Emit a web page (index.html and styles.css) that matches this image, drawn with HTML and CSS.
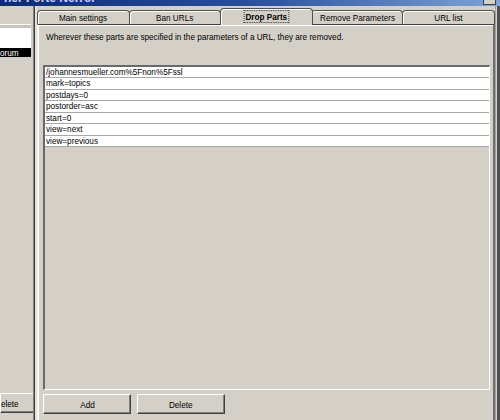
FILE: index.html
```html
<!DOCTYPE html>
<html>
<head>
<meta charset="utf-8">
<link rel="stylesheet" href="styles.css">
</head>
<body>
<div class="titlebar">
  <span class="title-text">ner Forte Nerror</span>
  <span class="title-btn"></span>
</div>
<div class="window">
  <div class="left-pane">
    <div class="left-head"></div>
    <div class="left-box">
      <div class="left-input"></div>
      <div class="left-item"><span class="t">Forum</span></div>
    </div>
    <div class="left-spacer"></div>
    <button class="btn btn-left"><span class="t">Delete</span></button>
  </div>
  <div class="splitter"></div>
  <div class="tab-area">
    <div class="tab-strip">
      <div class="tab"><span class="t c">Main settings</span></div>
      <div class="tab"><span class="t c">Ban URLs</span></div>
      <div class="tab tab-active"><span class="t c focus">Drop Parts</span></div>
      <div class="tab"><span class="t c">Remove Parameters</span></div>
      <div class="tab"><span class="t c">URL list</span></div>
    </div>
    <div class="tab-panel">
      <div class="desc"><span class="t">Wherever these parts are specified in the parameters of a URL, they are removed.</span></div>
      <div class="list">
        <div class="row"><span class="t">/johannesmueller.com%5Fnon%5Fssl</span></div>
        <div class="row"><span class="t">mark=topics</span></div>
        <div class="row"><span class="t">postdays=0</span></div>
        <div class="row"><span class="t">postorder=asc</span></div>
        <div class="row"><span class="t">start=0</span></div>
        <div class="row"><span class="t">view=next</span></div>
        <div class="row"><span class="t">view=previous</span></div>
      </div>
      <div class="btn-row">
        <button class="btn"><span class="t c">Add</span></button>
        <button class="btn"><span class="t c">Delete</span></button>
      </div>
    </div>
  </div>
  <div class="win-edge"></div>
</div>
</body>
</html>
```
FILE: styles.css
```css
html, body {
  margin: 0;
  padding: 0;
}
body {
  width: 500px;
  height: 420px;
  overflow: hidden;
  background: #d4d0c8;
  font-family: "Liberation Sans", Arial, sans-serif;
  font-size: 9.5px;
  color: #000;
  display: flex;
  flex-direction: column;
}
.t {
  display: inline-block;
  white-space: nowrap;
  transform: scaleX(0.86);
  transform-origin: left center;
}
.t.c {
  transform-origin: center center;
}
.titlebar {
  height: 6px;
  flex: none;
  background: linear-gradient(to right, #0c2a78 0%, #2a4f9c 50%, #7fa3d6 100%);
  position: relative;
  overflow: hidden;
}
.title-text {
  position: absolute;
  left: 4px;
  top: -9px;
  color: #fff;
  font-weight: bold;
  font-size: 12px;
  opacity: 0.8;
}
.title-btn {
  position: absolute;
  right: 4px;
  top: -8px;
  width: 11px;
  height: 11px;
  background: #d4d0c8;
  border: 1px solid #404040;
}
.window {
  flex: 1;
  display: flex;
  min-height: 0;
}
.left-pane {
  width: 33px;
  flex: none;
  display: flex;
  flex-direction: column;
  overflow: hidden;
}
.left-head {
  margin-top: 18px;
  height: 3px;
  width: 31px;
  background: #c8c4bc;
  border-top: 1px solid #fff;
}
.left-box {
  width: 31px;
  background: #fff;
}
.left-input {
  height: 20px;
}
.left-item {
  height: 9px;
  line-height: 9px;
  background: #000;
  color: #fff;
  white-space: nowrap;
  overflow: hidden;
  padding-left: 0;
}
.left-item .t {
  margin-left: -5px;
}
.left-spacer {
  flex: 1;
}
.btn-left {
  width: 32px;
  flex: none;
  margin-bottom: 7px;
  text-align: left;
  overflow: hidden;
  border-left-color: #d4d0c8;
}
.btn-left .t {
  margin-left: -6px;
}
.splitter {
  width: 4px;
  flex: none;
  border-left: 1px solid #808080;
  box-sizing: border-box;
  background: linear-gradient(to right, #404040 0 1px, #e4e1da 1px 100%);
}
.tab-area {
  width: 458px;
  flex: none;
  display: flex;
  flex-direction: column;
}
.tab-strip {
  height: 18px;
  display: flex;
  align-items: flex-end;
  position: relative;
  z-index: 1;
}
.tab {
  flex: 1;
  height: 13px;
  line-height: 13px;
  text-align: center;
  border: 1px solid #505050;
  border-bottom: none;
  border-radius: 4px 4px 0 0;
  box-shadow: inset 1px 1px 0 #fff;
  background: #d4d0c8;
  white-space: nowrap;
}
.tab + .tab {
  margin-left: -1px;
}
.tab-active {
  height: 16px;
  line-height: 16px;
  margin: 0 -2px -1px -2px;
  font-weight: bold;
  position: relative;
  z-index: 2;
}
.tab-active + .tab {
  margin-left: 0;
}
.focus {
  outline: 1px dotted #303030;
  outline-offset: 0;
  line-height: 11px;
  padding: 0 1px;
}
.tab-panel {
  flex: 1;
  border-top: 1px solid #404040;
  border-left: 1px solid #f4f2ee;
  border-right: 2px solid #707070;
  box-shadow: inset 1px 1px 0 #fff;
  padding: 0 3px 0 5px;
  display: flex;
  flex-direction: column;
}
.desc {
  padding: 6px 0 0 3px;
  height: 14px;
  line-height: 11px;
  white-space: nowrap;
}
.list {
  margin-top: 20px;
  height: 322px;
  border-left: 2px solid #6a6a6a;
  border-top: 2px solid #6a6a6a;
  border-right: 1px solid #fff;
  border-bottom: 1px solid #fff;
}
.row {
  height: 10.45px;
  line-height: 10.45px;
  border-bottom: 1px solid #a8a8a8;
  background: #fff;
  padding-left: 1px;
  white-space: nowrap;
}
.btn-row {
  display: flex;
  gap: 6px;
  margin-top: 4px;
}
.btn {
  width: 88px;
  height: 20px;
  padding: 0;
  font-family: inherit;
  font-size: 9.5px;
  color: #000;
  background: #d4d0c8;
  border: 1px solid;
  border-color: #fff #404040 #404040 #fff;
  box-shadow: inset -1px -1px 0 #808080;
}
.win-edge {
  flex: 1;
  border-left: 1px solid #a0a0a0;
  background: linear-gradient(to right, #d4d0c8 0 1px, #505050 1px 100%);
}
```
